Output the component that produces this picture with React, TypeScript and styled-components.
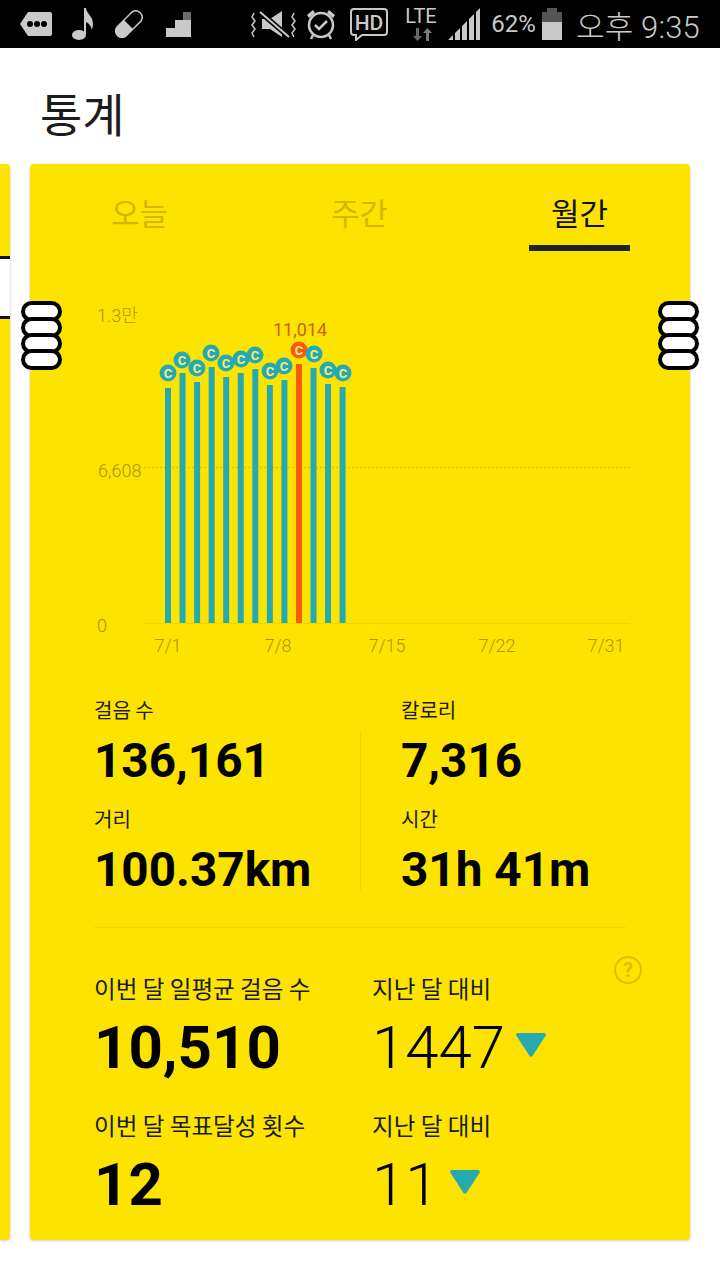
import React from "react"
import styled, { createGlobalStyle } from "styled-components"

const GlobalStyle = createGlobalStyle`
    html, body {
        margin: 0;
        padding: 0;
        background: #fff;
        font-family: Roboto, "Noto Sans CJK KR", sans-serif;
    }
`

const Page = styled.div`
    position: relative;
    width: 720px;
    height: 1280px;
    overflow: hidden;
    background: #fff;
`

const StatusBar = styled.div`
    display: flex;
    align-items: center;
    height: 48px;
    padding: 0 20px 0 20px;
    box-sizing: border-box;
    background: #000;
    color: #c9c9c9;
`

const StatusGroup = styled.div`
    display: flex;
    align-items: center;
    gap: 20px;
`

const StatusRight = styled.div`
    display: flex;
    align-items: center;
    margin-left: auto;
`

const BatteryText = styled.span`
    font-size: 24px;
    margin: 0 6px 0 11px;
`

const ClockText = styled.span`
    font-size: 31px;
    font-weight: 300;
    margin-left: 14px;
    letter-spacing: 0.2px;
    white-space: nowrap;
`

const NetworkLabel = styled.text`
    font-family: Roboto, sans-serif;
    font-size: 20px;
    font-weight: 400;
    fill: #c9c9c9;
    text-anchor: middle;
`

const Title = styled.h1`
    margin: 0;
    height: 116px;
    padding: 34px 0 0 40px;
    box-sizing: border-box;
    font-size: 46px;
    line-height: 60px;
    font-weight: 400;
    color: #1c1c1c;
    font-family: "Noto Sans CJK KR", sans-serif;
`

const Pager = styled.div`
    display: flex;
    gap: 20px;
    height: 1076px;
`

const PeekCard = styled.div`
    display: flex;
    flex-direction: column;
    width: 10px;
    flex-shrink: 0;
    background: #fce400;
    border-radius: 0 4px 4px 0;
    box-shadow: 0 1px 3px rgba(0, 0, 0, 0.2);
`

const PeekBox = styled.div`
    height: 57px;
    margin-top: 92px;
    background: #fff;
    border-top: 3px solid #111;
    border-bottom: 3px solid #111;
`

const Card = styled.div`
    width: 660px;
    flex-shrink: 0;
    background: #fce400;
    border-radius: 4px;
    box-shadow: 0 1px 3px rgba(0, 0, 0, 0.2);
`

const Tabs = styled.div`
    display: flex;
    justify-content: space-between;
    height: 87px;
    padding: 0 60px 0 59px;
`

const Tab = styled.div<{ $active?: boolean }>`
    width: 101px;
    height: 87px;
    box-sizing: border-box;
    padding-top: 25px;
    text-align: center;
    font-family: "Noto Sans CJK KR", sans-serif;
    font-size: 31px;
    line-height: 46px;
    font-weight: 400;
    color: ${props => props.$active ? "#111" : "#d2b600"};
    border-bottom: 6px solid ${props => props.$active ? "#222" : "transparent"};
`

const Chart = styled.svg`
    display: block;
    margin-top: 39px;
`

const AxisText = styled.text`
    font-family: Roboto, "Noto Sans CJK KR", sans-serif;
    font-size: 18px;
    font-weight: 300;
    fill: #a8950a;
`

const PeakText = styled.text`
    font-family: Roboto, sans-serif;
    font-size: 18px;
    font-weight: 400;
    fill: #cb6012;
`

const CoinLetter = styled.text`
    font-family: Roboto, sans-serif;
    font-size: 13px;
    font-weight: 700;
    fill: #f6ec80;
    text-anchor: middle;
`

const Totals = styled.div`
    display: grid;
    grid-template-columns: 266px 1fr;
    box-sizing: border-box;
    height: 229px;
    margin: 39px 64px 0;
    border-bottom: 1px solid #efd600;
`

const TotalsColumn = styled.div<{ $divided?: boolean }>`
    position: relative;
    display: flex;
    flex-direction: column;
    padding-left: ${props => props.$divided ? "41px" : "0"};

    ${props => props.$divided ? `
        &::before {
            content: "";
            position: absolute;
            left: 0;
            top: 33px;
            height: 158px;
            width: 1px;
            background: #eed500;
        }
    ` : ""}
`

const SmallLabel = styled.div<{ $next?: boolean }>`
    margin-top: ${props => props.$next ? "19px" : "0"};
    font-family: "Noto Sans CJK KR", sans-serif;
    font-size: 20px;
    line-height: 22px;
    color: #1a1a1a;
`

const BoldValue = styled.div`
    font-size: 47.7px;
    line-height: 56px;
    font-weight: 700;
    color: #000;
    white-space: nowrap;
    margin-top: 12px;
`

const Compare = styled.div`
    position: relative;
    display: grid;
    grid-template-columns: 278px 1fr;
    padding: 0 64px;
    margin-top: 46px;
`

const HelpIcon = styled.svg`
    position: absolute;
    top: -19px;
    right: 47px;
`

const CompareCell = styled.div``

const MidLabel = styled.div`
    font-family: "Noto Sans CJK KR", sans-serif;
    font-size: 23.6px;
    line-height: 28px;
    color: #1a1a1a;
    white-space: nowrap;
`

const BigValue = styled.div`
    height: 109px;
    padding-top: 10px;
    box-sizing: border-box;
    font-size: 60px;
    line-height: 72px;
    font-weight: 700;
    color: #000;
`

const ThinValue = styled.div`
    display: flex;
    align-items: flex-start;
    gap: 10px;
    height: 109px;
    padding-top: 10px;
    box-sizing: border-box;
    font-size: 60px;
    line-height: 72px;
    font-weight: 300;
    color: #000;
`

const TriangleIcon = styled.svg`
    margin-top: 20px;
`

const Handle = styled.div<{ $side: "left" | "right" }>`
    position: absolute;
    top: 301px;
    ${props => props.$side}: 21px;
    display: flex;
    flex-direction: column;
    width: 41px;
`

const HandleRing = styled.div`
    height: 21px;
    margin-bottom: -5px;
    box-sizing: border-box;
    background: #fff;
    border: 4px solid #000;
    border-radius: 11px;

    &:last-child {
        margin-bottom: 0;
    }
`

const barTops = [388, 373, 382, 367, 377, 373, 369, 385, 380, 364, 368, 384, 387]
const coins = [
    [168, 373], [182, 360], [197, 368], [211, 353], [226, 363], [241, 359], [255, 355],
    [270, 371], [284, 366], [299, 350], [314, 354], [328, 370], [343, 373],
]
const dates = [["7/1", 168], ["7/8", 278], ["7/15", 387], ["7/22", 497], ["7/31", 606]] as const
const PEAK = 9

function Triangle() {
    return (
        <TriangleIcon width="32" height="26" viewBox="0 0 32 26">
            <path d="M3 1h26c1.500 0 2.400 1.600 1.600 2.800L17.500 24c-.7 1.100-2.300 1.100-3 0L1.400 3.800C.6 2.600 1.500 1 3 1z" fill="#27a9b0" />
        </TriangleIcon>
    )
}

function StatusIcons() {
    return (
        <StatusGroup>
            <svg width="32" height="26" viewBox="0 0 32 26">
                <path d="M8 1h22a2 2 0 0 1 2 2v20a2 2 0 0 1-2 2H8L0 13z" fill="#c9c9c9" />
                <circle cx="10" cy="13" r="3" fill="#000" />
                <circle cx="17" cy="13" r="3" fill="#000" />
                <circle cx="24" cy="13" r="3" fill="#000" />
            </svg>
            <svg width="22" height="34" viewBox="0 0 22 34">
                <ellipse cx="7" cy="28" rx="7" ry="5" fill="#c9c9c9" />
                <path d="M12 27V1h2c0 5 7 8 7 16 0 2-.5 4-1.500 6 .2-4-3-7-5.500-8v12z" fill="#c9c9c9" />
            </svg>
            <svg width="30" height="30" viewBox="0 0 30 30">
                <path d="M3 18L18 3a6.500 6.500 0 0 1 9 9L12 27a6.500 6.500 0 0 1-9-9z" fill="#000" stroke="#c9c9c9" strokeWidth="1.500" />
                <path d="M2 19l8-8 9 9-7.500 7.500a6.500 6.500 0 0 1-9.500-8.500z" fill="#c9c9c9" />
            </svg>
            <svg width="26" height="25" viewBox="0 0 26 25" style={{ marginLeft: 2 }}>
                <path d="M0 25V16h9V8h8V0h8v25z" fill="#c9c9c9" />
                <rect x="17" y="0" width="8" height="8" fill="#6a6a6a" />
            </svg>
        </StatusGroup>
    )
}

function StatusRightIcons() {
    return (
        <StatusRight>
            <svg width="46" height="30" viewBox="0 0 46 30">
                <path d="M3 4l-2 4 3 4-3 4 3 4-3 4 2 4M43 4l-2 4 3 4-3 4 3 4-3 4 2 4" fill="none" stroke="#c9c9c9" strokeWidth="1.500" />
                <path d="M11 10h8l12-8v26l-12-8h-8z" fill="#c9c9c9" />
                <path d="M9 3l29 25" stroke="#000" strokeWidth="5" />
                <path d="M9 3l29 25" stroke="#c9c9c9" strokeWidth="2" />
            </svg>
            <svg width="32" height="32" viewBox="0 0 32 32" style={{ marginLeft: 8 }}>
                <circle cx="16" cy="17" r="12" fill="none" stroke="#c9c9c9" strokeWidth="2.500" />
                <path d="M10 17l4 4 8-8" fill="none" stroke="#c9c9c9" strokeWidth="2.500" />
                <path d="M2 7l6-5 2 3-6 5zM30 7l-6-5-2 3 6 5z" fill="#c9c9c9" />
                <path d="M8 27l-2 4M24 27l2 4" stroke="#c9c9c9" strokeWidth="2.500" />
            </svg>
            <svg width="40" height="34" viewBox="0 0 40 34" style={{ marginLeft: 12 }}>
                <path d="M5 2h30a3 3 0 0 1 3 3v20a3 3 0 0 1-3 3H13l-6 5v-5H5a3 3 0 0 1-3-3V5a3 3 0 0 1 3-3z" fill="none" stroke="#c9c9c9" strokeWidth="2" />
                <text x="20" y="23" textAnchor="middle" fontFamily="Roboto" fontWeight="500" fontSize="21" fill="#c9c9c9">HD</text>
            </svg>
            <svg width="38" height="40" viewBox="0 0 38 40" style={{ marginLeft: 13 }}>
                <NetworkLabel x="19" y="19">LTE</NetworkLabel>
                <path d="M14 24v8h-3l4.500 5 4.500-5h-3v-8z" fill="#6a6a6a" />
                <path d="M24 37v-8h-3l4.500-5 4.500 5h-3v8z" fill="#7a7a7a" />
            </svg>
            <svg width="32" height="32" viewBox="0 0 32 32" style={{ marginLeft: 8 }}>
                <path d="M0 32l5-5v5zM7 25l5-5v12H7zM14 18l5-5v19h-5zM21 11l5-5v26h-5zM28 4l4-4v32h-4z" fill="#c9c9c9" />
            </svg>
            <BatteryText>62%</BatteryText>
            <svg width="20" height="32" viewBox="0 0 20 32">
                <path d="M0 4h5V0h10v4h5v28H0z" fill="#555" />
                <rect x="0" y="14" width="20" height="18" fill="#c9c9c9" />
            </svg>
            <ClockText>오후 9:35</ClockText>
        </StatusRight>
    )
}

function StepsChart() {
    return (
        <Chart width="660" height="370" viewBox="30 290 660 370">
            <AxisText x="97" y="322">1.3만</AxisText>
            <AxisText x="98" y="477">6,608</AxisText>
            <AxisText x="97" y="632">0</AxisText>
            <line x1="144" y1="467.500" x2="630" y2="467.500" stroke="#dcc400" strokeWidth="1.500" strokeDasharray="2 2" />
            <line x1="144" y1="623.500" x2="630" y2="623.500" stroke="#efd600" />
            {barTops.map((top, i) => (
                <rect key={i} x={165 + i * 14.55} y={top} width="6" height={623 - top} fill={i === PEAK ? "#f9590b" : "#27a9b0"} />
            ))}
            {coins.map(([cx, cy], i) => (
                <g key={i}>
                    <circle cx={cx} cy={cy} r="8.500" fill={i === PEAK ? "#f9590b" : "#27a9b0"} />
                    <CoinLetter x={cx} y={cy + 4.500}>C</CoinLetter>
                </g>
            ))}
            <PeakText x="273" y="336">11,014</PeakText>
            {dates.map(([label, x]) => (
                <AxisText key={label} x={x} y="652" textAnchor="middle">{label}</AxisText>
            ))}
        </Chart>
    )
}

export default function App() {
    return (
        <Page>
            <GlobalStyle />
            <StatusBar>
                <StatusIcons />
                <StatusRightIcons />
            </StatusBar>
            <Title>통계</Title>
            <Pager>
                <PeekCard>
                    <PeekBox />
                </PeekCard>
                <Card>
                    <Tabs>
                        <Tab>오늘</Tab>
                        <Tab>주간</Tab>
                        <Tab $active>월간</Tab>
                    </Tabs>
                    <StepsChart />
                    <Totals>
                        <TotalsColumn>
                            <SmallLabel>걸음 수</SmallLabel>
                            <BoldValue>136,161</BoldValue>
                            <SmallLabel $next>거리</SmallLabel>
                            <BoldValue>100.37km</BoldValue>
                        </TotalsColumn>
                        <TotalsColumn $divided>
                            <SmallLabel>칼로리</SmallLabel>
                            <BoldValue>7,316</BoldValue>
                            <SmallLabel $next>시간</SmallLabel>
                            <BoldValue>31h 41m</BoldValue>
                        </TotalsColumn>
                    </Totals>
                    <Compare>
                        <HelpIcon width="30" height="30" viewBox="0 0 30 30">
                            <circle cx="15" cy="15" r="13" fill="none" stroke="#dcc000" strokeWidth="2" />
                            <text x="15" y="22" textAnchor="middle" fontFamily="Roboto" fontWeight="700" fontSize="20" fill="#dcc000">?</text>
                        </HelpIcon>
                        <CompareCell>
                            <MidLabel>이번 달 일평균 걸음 수</MidLabel>
                            <BigValue>10,510</BigValue>
                        </CompareCell>
                        <CompareCell>
                            <MidLabel>지난 달 대비</MidLabel>
                            <ThinValue>1447<Triangle /></ThinValue>
                        </CompareCell>
                        <CompareCell>
                            <MidLabel>이번 달 목표달성 횟수</MidLabel>
                            <BigValue>12</BigValue>
                        </CompareCell>
                        <CompareCell>
                            <MidLabel>지난 달 대비</MidLabel>
                            <ThinValue>11<Triangle /></ThinValue>
                        </CompareCell>
                    </Compare>
                </Card>
            </Pager>
            <Handle $side="left">
                <HandleRing /><HandleRing /><HandleRing /><HandleRing />
            </Handle>
            <Handle $side="right">
                <HandleRing /><HandleRing /><HandleRing /><HandleRing />
            </Handle>
        </Page>
    )
}
